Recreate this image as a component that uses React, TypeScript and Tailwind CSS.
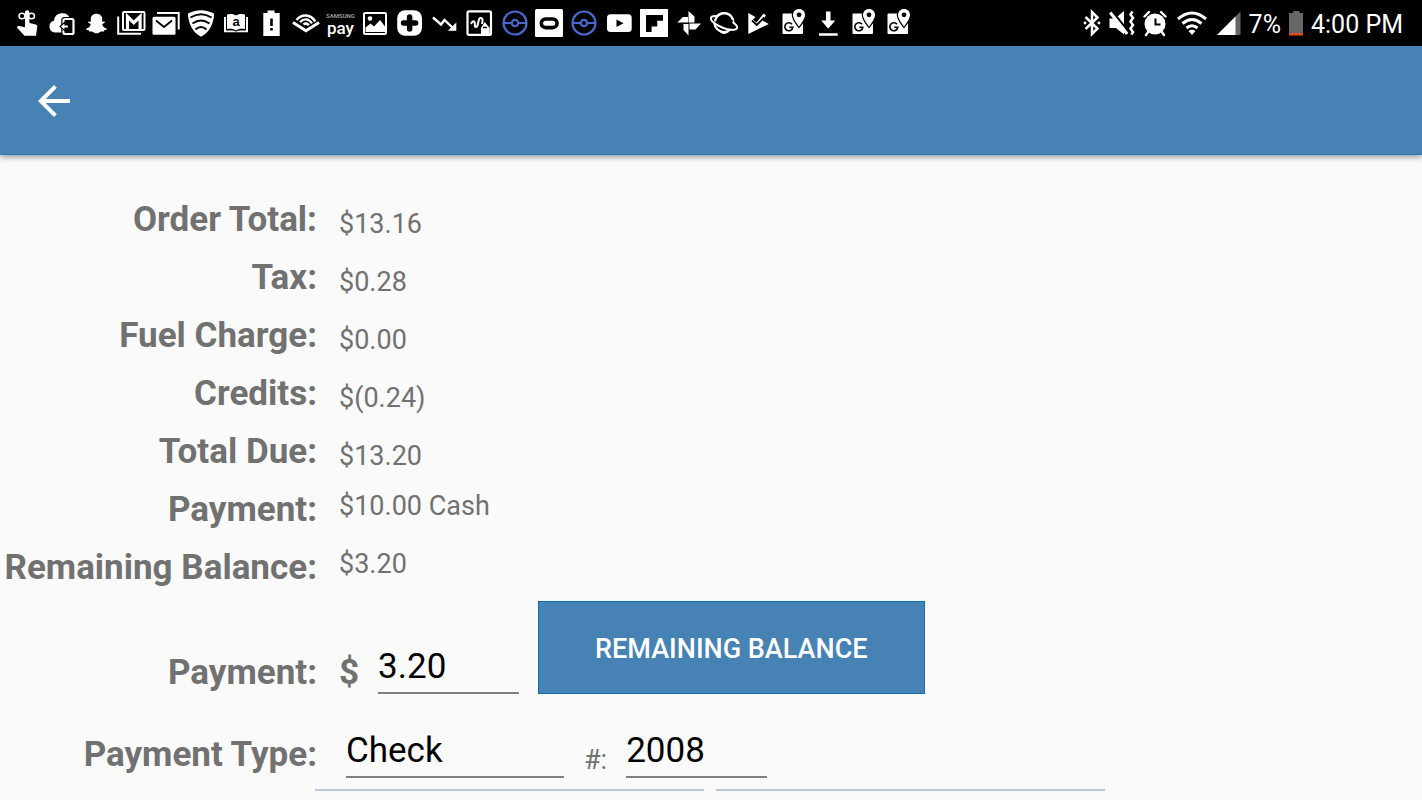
import { useState, type ReactNode } from "react";
import { FaSnapchatGhost } from "react-icons/fa";

const SUMMARY = [
  { label: "Order Total:", value: "$13.16" },
  { label: "Tax:", value: "$0.28" },
  { label: "Fuel Charge:", value: "$0.00" },
  { label: "Credits:", value: "$(0.24)" },
  { label: "Total Due:", value: "$13.20" },
  { label: "Payment:", value: "$10.00 Cash", raised: true },
  { label: "Remaining Balance:", value: "$3.20", raised: true },
];

function Glyph({ children }: { children: ReactNode }) {
  return (
    <svg viewBox="0 0 28 28" className="h-7 w-7 shrink-0 overflow-visible" fill="#fff" aria-hidden="true">
      {children}
    </svg>
  );
}

function PokeBall() {
  return (
    <Glyph>
      <g fill="none" stroke="#4a68cc" strokeWidth="2.2">
        <circle cx="14" cy="14" r="11.5" />
        <circle cx="14" cy="14" r="3.2" />
        <path d="M2.5 14h8M17.5 14h8" />
      </g>
    </Glyph>
  );
}

function MapsPin() {
  return (
    <Glyph>
      <path d="M4.5 4.5h13l6.5 8v11.5a1 1 0 0 1-1 1H4.5a1 1 0 0 1-1-1v-18.500a1 1 0 0 1 1-1z" />
      <path
        d="M20 0c-3.500 0-6 2.600-6 6 0 4 6 11.500 6 11.500S26 10 26 6c0-3.400-2.500-6-6-6z"
        stroke="#000"
        strokeWidth="2.5"
        paintOrder="stroke"
      />
      <circle cx="20" cy="5.800" r="2.400" fill="#000" />
      <path d="M13 15.300a4 4 0 1 0 .8 3H10.300" fill="none" stroke="#000" strokeWidth="1.600" />
    </Glyph>
  );
}

function Notifications() {
  return (
    <div className="flex w-[899px] items-center justify-between">
      {/* touch */}
      <Glyph>
        <path d="M12 3.500a2.200 2.200 0 0 1 4.400 0V14l6.400 1.600a2 2 0 0 1 1.500 2.200L23 26.700H11.500L3.800 18.500l1.500-1.700 6.700 1.400z" />
        <g fill="none" stroke="#fff" strokeWidth="1.500">
          <ellipse cx="9" cy="7" rx="3" ry="2.800" />
          <ellipse cx="18.500" cy="7" rx="3" ry="2.800" />
        </g>
      </Glyph>
      {/* cloud backup */}
      <Glyph>
        <path d="M7 23.500a6 6 0 0 1-1-11.800A8.300 8.300 0 0 1 22 9.500V23.500z" />
        <rect x="15" y="9.800" width="10.500" height="15.200" rx="1.500" fill="#000" stroke="#000" strokeWidth="3.500" />
        <rect x="15.500" y="10" width="10" height="15" rx="1.500" fill="#000" stroke="#fff" strokeWidth="2.200" />
        <path d="M12 17.500l5-4.500v3h3.500v3H17v3z" stroke="#000" strokeWidth="1.200" />
      </Glyph>
      <span className="flex h-7 w-7 items-center justify-center">
        <FaSnapchatGhost className="h-[21px] w-[21px] text-white" />
      </span>
      {/* stacked gmail */}
      <Glyph>
        <path d="M1.200 7.500V24.800H24" fill="none" stroke="#fff" strokeWidth="2" />
        <rect x="6" y="3" width="21.500" height="18" rx="1" fill="#000" stroke="#fff" strokeWidth="2" />
        <path d="M10.500 20V7.500l6.300 6.200 6.300-6.200V20" fill="none" stroke="#fff" strokeWidth="3.200" />
      </Glyph>
      {/* stacked mail */}
      <Glyph>
        <path d="M5 4h21.700v16.500" fill="none" stroke="#fff" strokeWidth="2" />
        <rect x=".5" y="7.700" width="23" height="18" rx="1.500" />
        <path d="M4 11.500l8 6.500 8-6.500" fill="none" stroke="#000" strokeWidth="1.800" />
      </Glyph>
      {/* wifi shield */}
      <Glyph>
        <path d="M14 1.200c5 0 9 1.300 13 3.300 0 9-4 18.500-13 23.300C5 23 1 13.500 1 4.500c4-2 8-3.300 13-3.300z" />
        <g fill="none" stroke="#000" strokeWidth="2">
          <path d="M3.500 8.500Q14 1.800 24.500 8.500" />
          <path d="M5.500 14.500Q14 8.500 22.500 14.500" />
          <path d="M8.500 20.500Q14 15.500 19.500 20.500" />
        </g>
      </Glyph>
      {/* kindle book */}
      <Glyph>
        <path d="M2 8h2.500v13.500H13l1 1 1-1h8.500V8H26v15.300H2z" />
        <path
          d="M5 5.500c3.800-1 6.900-.5 9 1 2.100-1.500 5.200-2 9-1v14.500c-3.900-.8-6.900-.3-9 1.500-2.100-1.800-5.100-2.300-9-1.500z"
          stroke="#000"
          strokeWidth="2"
          paintOrder="stroke"
        />
        <text x="14" y="17" textAnchor="middle" fontFamily="Liberation Sans, sans-serif" fontSize="13" fontWeight="700" fill="#000">
          a
        </text>
      </Glyph>
      {/* battery alert */}
      <Glyph>
        <path d="M6.300 4h4.200V1.500h7V4h5.200v23H6.300z" />
        <path d="M13.200 9.500h2.600v7.500h-2.600zM13.200 19h2.600v2.500h-2.600z" fill="#000" />
      </Glyph>
      {/* audible */}
      <Glyph>
        <g fill="none" stroke="#fff" strokeWidth="2.400">
          <path d="M1 13.500l13 8.300 13-8.300" strokeWidth="3" />
          <path d="M4.500 11C10 4.500 18.500 5 23.300 12.500" />
          <path d="M8 13.200c4.300-4.500 8.800-3.300 12 1.200" />
          <path d="M11.500 15.500c2-1.700 4-1.300 5.200.8" />
        </g>
      </Glyph>
      <span className="flex h-7 w-7 flex-col items-center text-white">
        <span className="pt-1 text-[6px] leading-[6px] font-bold text-[#999]">SAMSUNG</span>
        <span className="text-[17px] leading-[18px] font-medium">pay</span>
      </span>
      {/* picture */}
      <Glyph>
        <rect x="3" y="4" width="22" height="21" rx="1" fill="none" stroke="#fff" strokeWidth="2" />
        <path d="M4.500 23V18.500l5-4 3.500 3 6-6.500 5 6.500V23z" />
        <circle cx="9" cy="9.500" r="2.300" />
      </Glyph>
      {/* health plus */}
      <Glyph>
        <rect x="1.200" y="1.200" width="24.800" height="25.600" rx="8" />
        <path d="M13.600 8v12M7.600 14h12" stroke="#000" strokeWidth="5.500" strokeLinecap="round" />
      </Glyph>
      {/* trend down */}
      <Glyph>
        <path d="M2 8.500l8 7 3.500-4.500 9.500 9" fill="none" stroke="#fff" strokeWidth="2.400" />
        <path d="M25.300 13.500v8.300h-8.500z" />
      </Glyph>
      {/* sketch pad */}
      <Glyph>
        <rect x="1.500" y="2.300" width="23.500" height="23.500" rx="1.500" fill="none" stroke="#fff" strokeWidth="2.200" />
        <path
          d="M5 15c1-2 2.500-4 3.500-2s-.5 5 1.500 5c3 0 1.500-9 4.500-9s2 3 1.500 6"
          fill="none"
          stroke="#fff"
          strokeWidth="2"
        />
        <path d="M15 25v-6l3.700-6 5 6v6z" />
        <path d="M17 18.500h4" stroke="#000" strokeWidth="1.500" />
      </Glyph>
      <PokeBall />
      {/* oculus */}
      <Glyph>
        <rect width="28" height="28" rx="1.500" />
        <rect x="6.300" y="10" width="15.800" height="8.600" rx="4.300" fill="#fff" stroke="#000" strokeWidth="3.600" />
      </Glyph>
      <PokeBall />
      {/* youtube */}
      <Glyph>
        <rect x="2" y="5.300" width="24.700" height="17.800" rx="3.500" />
        <path d="M11.500 10.500l7 3.700-7 3.700z" fill="#000" />
      </Glyph>
      {/* flipboard */}
      <Glyph>
        <rect width="28" height="28" />
        <path d="M6 6h17v5.800h-5.800v5.600h-5.600v5.600H6z" fill="#000" />
      </Glyph>
      {/* pinwheel */}
      <Glyph>
        <path d="M13.500 2l6 5.500v6h-6zM26 14.500l-5.500 6h-6v-6zM13.500 26.500l-5-5.500v-6h5zM2.300 13.500L8 8h5v5.500z" />
      </Glyph>
      {/* planet */}
      <Glyph>
        <circle cx="14" cy="13.500" r="9.500" fill="none" stroke="#fff" strokeWidth="2.200" />
        <ellipse
          cx="14"
          cy="14"
          rx="14"
          ry="4.800"
          transform="rotate(22 14 14)"
          fill="#000"
          stroke="#fff"
          strokeWidth="2"
        />
        <path d="M4.500 12.500a9.500 9.500 0 0 1 18.500-1.500l-1 4.500z" fill="#000" />
        <path d="M5 12.500a9.200 9.200 0 0 1 18-1.500" fill="none" stroke="#fff" strokeWidth="2.200" />
        <path d="M9 22c2.500 1 7 1.500 10 .8-3 3-7.500 3-10-.8z" />
      </Glyph>
      {/* play check */}
      <Glyph>
        <path d="M4.300 4l7.200 4L9 10.500l3.500 3L19.500 4.500l2.500 2-3.500 5 6.300 3.500L4.300 25z" />
        <path d="M8 11.500l4.800 4.500 7.500-7.500" fill="none" stroke="#000" strokeWidth="1.800" />
      </Glyph>
      <MapsPin />
      {/* download */}
      <Glyph>
        <path d="M12 2.500h4.500v9h4.700l-7 8.300-7-8.300H12zM5 24.300h18.700v2.400H5z" />
      </Glyph>
      <MapsPin />
      <MapsPin />
    </div>
  );
}

function SystemStatus() {
  return (
    <div className="flex shrink-0 items-center gap-2 text-[25px] leading-7 text-white">
      {/* bluetooth */}
      <svg viewBox="0 0 18 28" className="h-7 w-[18px]" fill="none" stroke="#fff" strokeWidth="2.500" aria-hidden="true">
        <path d="M2.500 8l12 11.500L9 25v-22l5.500 5.500L2.500 20" />
        <path d="M2 14h.1M15.900 14h.1" strokeWidth="2.800" strokeLinecap="round" />
      </svg>
      {/* muted, vibrate */}
      <svg viewBox="0 0 26 28" className="h-7 w-[26px]" fill="#fff" aria-hidden="true">
        <path d="M.5 9.500h5.500l9-7.500v23.500l-8-6.500H.5z" />
        <path d="M3.500 2.500l16.500 21" stroke="#000" strokeWidth="2.200" />
        <path d="M1.200 3.500l17 21.500" stroke="#fff" strokeWidth="3" />
        <path
          d="M23.500 2.500l-2 3 2.500 3.500-2.500 3.500 2.500 3.500-2.500 3.500 2.500 3.500-1.500 2.500"
          fill="none"
          stroke="#fff"
          strokeWidth="2.500"
        />
      </svg>
      {/* alarm */}
      <svg viewBox="0 0 24 28" className="h-7 w-6" fill="#fff" aria-hidden="true">
        <circle cx="12" cy="15" r="10.500" />
        <path
          d="M1.500 7.500l4.500-4.500M22.500 7.500l-4.500-4.500M5.500 22.500L3 26M18.500 22.500L21 26"
          stroke="#fff"
          strokeWidth="2.400"
          strokeLinecap="round"
        />
        <path d="M12.500 9.500v6h5" fill="none" stroke="#000" strokeWidth="2" />
      </svg>
      {/* wifi */}
      <svg viewBox="0 0 34 28" className="h-7 w-[34px]" fill="none" stroke="#fff" strokeWidth="3" aria-hidden="true">
        <path d="M3 10Q17 -2 31 10" />
        <path d="M7.500 14.500Q17 6.500 26.500 14.500" />
        <path d="M11.500 19Q17 14.500 22.500 19" />
        <path d="M13.500 22Q17 19.500 20.500 22L17 26z" fill="#fff" stroke="none" />
      </svg>
      {/* signal */}
      <svg viewBox="0 0 24 28" className="h-7 w-6" aria-hidden="true">
        <path d="M23.500 2.500V26H0z" fill="#666" />
        <path d="M18.500 7.500V26H0z" fill="#fff" />
      </svg>
      <span className="pt-1">7%</span>
      {/* battery */}
      <svg viewBox="0 0 14 28" className="h-7 w-[14px]" aria-hidden="true">
        <path d="M0 4h4V2h6.500v2H14v22H0z" fill="#666" />
        <path d="M0 24h14v2.500H0z" fill="#e64a19" />
      </svg>
      <span className="pt-1">4:00 PM</span>
    </div>
  );
}

const labelClass = "w-[317px] shrink-0 text-right text-[35px] font-bold text-[#717171]";
const inputClass =
  "rounded-none border-b-2 border-[#808080] bg-transparent pb-1 text-[35px] leading-[42px] text-black outline-none";

export default function App() {
  const [payment, setPayment] = useState("3.20");
  const [paymentType, setPaymentType] = useState("Check");
  const [checkNumber, setCheckNumber] = useState("2008");

  return (
    <div className="h-screen w-full overflow-hidden bg-[#fafafa] font-[Roboto,sans-serif]">
      <div className="flex h-[46px] items-center justify-between bg-black pr-[19px] pl-[13px]">
        <Notifications />
        <SystemStatus />
      </div>

      <header className="flex h-[109px] items-center border-b border-[#2f78b0] bg-[#4682b4] pt-[2px] pl-[30px] shadow-[0_2px_6px_rgba(0,0,0,0.4)]">
        <button type="button" aria-label="Back">
          <svg viewBox="0 0 24 24" className="h-12 w-12" fill="#fff" aria-hidden="true">
            <path d="M20 11H7.830l5.590-5.590L12 4l-8 8 8 8 1.410-1.410L7.830 13H20v-2z" />
          </svg>
        </button>
      </header>

      <main className="pt-9">
        <dl>
          {SUMMARY.map((row) => (
            <div key={row.label} className="flex h-[58px] items-center gap-[22px]">
              <dt className={`${labelClass} leading-[42px] whitespace-nowrap`}>{row.label}</dt>
              <dd className={`text-[27px] leading-9 text-[#717171] ${row.raised ? "pb-2" : "pt-2"}`}>{row.value}</dd>
            </div>
          ))}
        </dl>

        <div className="mt-1 flex items-end">
          <label htmlFor="payment" className={`${labelClass} leading-[42px]`}>
            Payment:
          </label>
          <span className="ml-[22px] text-[35px] leading-[42px] font-bold text-[#717171]">$</span>
          <input
            id="payment"
            inputMode="decimal"
            value={payment}
            onChange={(e) => setPayment(e.target.value)}
            className={`${inputClass} ml-[19px] w-[141px]`}
          />
          <button
            type="button"
            onClick={() => setPayment("3.20")}
            className="ml-[19px] h-[93px] border border-[#0f6ca8] bg-[#4682b4] px-14 pt-[3px] text-[27px] font-medium text-white"
          >
            REMAINING BALANCE
          </button>
        </div>

        <div className="mt-9 flex items-end">
          <label htmlFor="payment-type" className={`${labelClass} pb-[2px] leading-[42px]`}>
            Payment Type:
          </label>
          <input
            id="payment-type"
            value={paymentType}
            onChange={(e) => setPaymentType(e.target.value)}
            className={`${inputClass} ml-[29px] w-[218px]`}
          />
          <label htmlFor="check-number" className="ml-5 text-[27px] leading-9 text-[#717171]">
            #:
          </label>
          <input
            id="check-number"
            inputMode="numeric"
            value={checkNumber}
            onChange={(e) => setCheckNumber(e.target.value)}
            className={`${inputClass} ml-[19px] w-[141px]`}
          />
        </div>

        {/* Top edges of the next pair of boxes */}
        <div className="mt-[11px] ml-[315px] flex gap-3">
          <div className="w-[389px] border-t-2 border-[#bac8db]" />
          <div className="w-[389px] border-t-2 border-[#bac8db]" />
        </div>
      </main>
    </div>
  );
}
